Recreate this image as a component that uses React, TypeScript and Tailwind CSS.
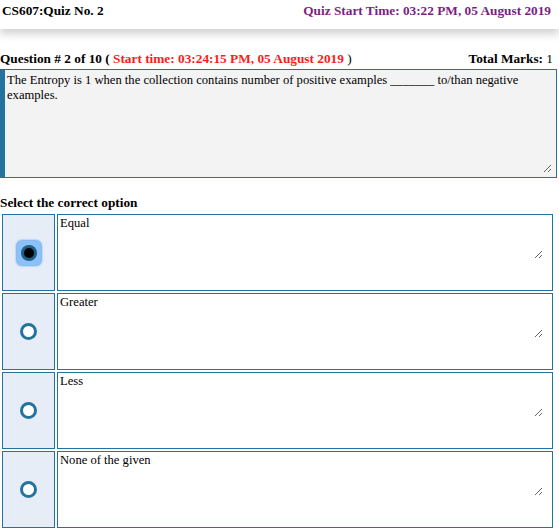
import React from "react";

const options = ["Equal", "Greater", "Less", "None of the given"];
const serif = '"Liberation Serif", "Times New Roman", serif';

function Radio({ checked }: { checked: boolean }) {
  if (checked) {
    return (
      <span className="flex h-[24px] w-[24px] items-center justify-center rounded-[5px] bg-[#8cc1f7] shadow-[0_0_2px_1px_#6aa9ee]">
        <span className="flex h-[16px] w-[16px] items-center justify-center rounded-full bg-[#1d5f87]">
          <span className="h-[10px] w-[10px] rounded-full bg-black" />
        </span>
      </span>
    );
  }
  return (
    <span className="block h-[17px] w-[17px] rounded-full border-[3px] border-[#23739f] bg-white" />
  );
}

export default function App() {
  return (
    <div className="w-[559px] bg-white text-black" style={{ fontFamily: serif }}>
      <header className="relative flex h-[29px] items-start justify-between pl-[2px] pr-[8px] pt-[3px] shadow-[0_5px_8px_rgba(0,0,0,0.18)]">
        <span className="text-[13.3px] font-bold leading-[16px]">CS607:Quiz No. 2</span>
        <span className="text-[13.3px] font-bold leading-[16px] text-[#7b1f80]">Quiz Start Time: 03:22 PM, 05 August 2019</span>
      </header>

      <div className="mt-[22px] flex items-center justify-between pr-[6px] text-[13.3px] font-bold leading-[16px]">
        <span>
          Question # 2 of 10 ( <span className="text-[#ff1a1a]">Start time: 03:24:15 PM, 05 August 2019</span>{" "}
          <span className="font-normal">)</span>
        </span>
        <span>
          Total Marks: <span className="font-normal">1</span>
        </span>
      </div>

      <div className="mt-[2px] h-[109px] w-[557px] border border-l-[5px] border-[#23739f] bg-[#f3f3f3] pb-[4px] pr-[4px]">
        <textarea
          readOnly
          className="block h-full w-full resize-y bg-transparent px-[2px] pt-[3px] text-[12.6px] leading-[15px] outline-none"
          style={{ fontFamily: serif }}
          defaultValue="The Entropy is 1 when the collection contains number of positive examples _______ to/than negative examples."
        />
      </div>

      <div className="mt-[17px] text-[13.3px] font-bold leading-[16px]">Select the correct option</div>

      <div className="grid w-[555px] grid-cols-[53px_1fr] gap-[2px] p-[2px] pt-[3px]">
        {options.map((opt, i) => (
          <React.Fragment key={opt}>
            <div className="flex h-[77px] items-center justify-center border border-[#23739f] bg-[#e6edf7]">
              <Radio checked={i === 0} />
            </div>
            <div className="h-[77px] border border-[#23739f] bg-white pr-[9px]">
              <textarea
                readOnly
                className="block h-[44px] w-full resize-y bg-transparent px-[2px] pt-[1px] text-[12.6px] leading-[15px] outline-none"
                style={{ fontFamily: serif }}
                defaultValue={opt}
              />
            </div>
          </React.Fragment>
        ))}
      </div>
    </div>
  );
}
